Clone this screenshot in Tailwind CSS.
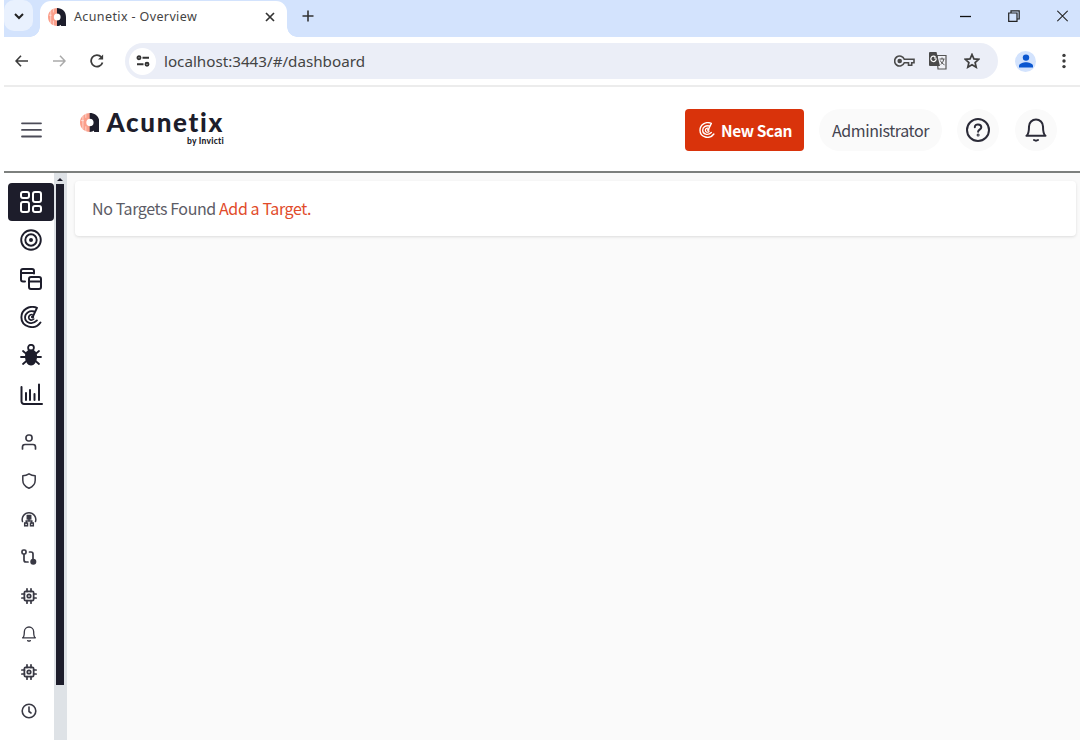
<!DOCTYPE html>
<html lang="en">
<head>
  <meta charset="UTF-8">
  <meta name="viewport" content="width=device-width, initial-scale=1.0">
  <title>Acunetix - Overview</title>
  <script src="https://cdn.jsdelivr.net/npm/@tailwindcss/browser@4"></script>
</head>
<body class="bg-white">
  <!-- Shared symbols -->
  <svg class="hidden">
    <symbol id="mark" viewBox="0 0 20 20">
      <path d="M10.500 0v6a4 4 0 0 0 0 8v6C4 20 0 15.500 0 10S4 0 10.500 0z" fill="#fb9f8b"/>
      <path d="M3 2v15M6 1v4m0 9v6M1 8h3" stroke="#fff" stroke-width=".6" fill="none"/>
      <path d="M10 0c6 0 10 4 10 10v10h-5.500v-1.500C13.500 19.500 12 20 10 20v-6a4 4 0 0 0 0-8z" fill="#1d1d2b"/>
    </symbol>
    <symbol id="radar" viewBox="0 0 24 24" fill="none" stroke="currentColor" stroke-linecap="round" stroke-linejoin="round">
      <path d="M14 11.500L18.500 2C10-1.300 1.500 4 1.500 12.300C1.500 22.800 16 27 22.300 18" stroke-width="2.100"/>
      <path d="M15.500 6C10 4.500 5.500 8 5.500 12.300C5.500 18.500 13.500 21 18.500 15.800" stroke-width="2"/>
      <path d="M13.200 9.300C11 9.200 9.500 10.600 9.500 12.500C9.500 15 12.500 16.500 15 14.200" stroke-width="1.800"/>
      <circle cx="13.600" cy="12" r="1.200" fill="currentColor"/>
    </symbol>
    <symbol id="bell" viewBox="0 0 24 24" fill="none" stroke="currentColor" stroke-width="2" stroke-linecap="round" stroke-linejoin="round">
      <path d="M2.500 17.800h19c-2.200-1.600-2.500-4-2.500-9.300a7 7 0 0 0-14 0c0 5.300-.3 7.700-2.500 9.300zM10 22q2 1.300 4 0"/>
    </symbol>
    <symbol id="chip" viewBox="0 0 24 24" fill="none" stroke="currentColor" stroke-width="2.600" stroke-linecap="round">
      <rect x="5" y="5" width="14" height="14" rx="2"/>
      <circle cx="12" cy="12" r="2.600"/>
      <path d="M9 1.300v4M15 1.300v4M9 19v3.700M15 19v3.700M1.300 9h4M1.300 15h4M19 9h3.700M19 15h3.700"/>
    </symbol>
  </svg>

  <div class="w-[1080px] h-[740px] pl-1 flex flex-col overflow-hidden bg-white text-[#1d1d2b]">
    <!-- Tab strip -->
    <div class="h-[37px] shrink-0 bg-[#d3e3fd] flex">
      <div class="w-9 flex">
        <div class="w-[29px] h-[31px] rounded-[10px] bg-[#e9f1fe] flex items-center justify-center">
          <svg class="w-3 h-3" viewBox="0 0 12 12" fill="none" stroke="#222" stroke-width="2"><path d="M2 4l4 4 4-4"/></svg>
        </div>
      </div>
      <div class="w-[247px] h-9 mt-px rounded-t-[11px] bg-white flex items-center pb-[5px] relative">
        <div class="absolute -left-2.5 bottom-0 w-2.5 h-2.5 bg-[radial-gradient(circle_at_0_0,#d3e3fd_9.5px,#fff_10px)]"></div>
        <div class="absolute -right-2.5 bottom-0 w-2.5 h-2.5 bg-[radial-gradient(circle_at_100%_0,#d3e3fd_9.5px,#fff_10px)]"></div>
        <svg class="w-[18px] h-[18px] ml-2"><use href="#mark"/></svg>
        <span class="ml-2 w-[180px] font-['Noto_Sans',sans-serif] text-[12.500px] leading-4 text-[#444] tracking-[0.380px] whitespace-nowrap">Acunetix - Overview</span>
        <svg class="w-2.5 h-2.5 ml-[11px]" viewBox="0 0 10 10" stroke="#333" stroke-width="1.700"><path d="M1 1l8 8M9 1L1 9"/></svg>
      </div>
      <div class="ml-[15px] flex-1 flex items-center pb-[5px]">
        <svg class="w-3 h-3" viewBox="0 0 12 12" stroke="#333" stroke-width="1.600"><path d="M6 .5v11M.5 6h11"/></svg>
      </div>
      <div class="flex items-center pb-[5px] pr-3 gap-[37px]">
        <svg class="w-[11px] h-3" viewBox="0 0 11 12" stroke="#111" stroke-width="1.300"><path d="M0 6.500h11"/></svg>
        <svg class="w-3 h-3" viewBox="0 0 12 12" fill="none" stroke="#222" stroke-width="1.200"><path d="M.7 3h8.300v8.300H.7zM3 3V.8h8.200V9H9"/></svg>
        <svg class="w-[11px] h-3" viewBox="0 0 11 12" stroke="#222" stroke-width="1.200"><path d="M.3.800l10.400 10.400M10.700.800L.3 11.200"/></svg>
      </div>
    </div>

    <!-- Address bar -->
    <div class="h-[50px] shrink-0 border-b-2 border-[#ececec] flex items-center text-[#444]">
      <svg class="w-[13px] h-3 ml-[11px]" viewBox="0 0 13 12" fill="none" stroke="#3c3c3c" stroke-width="1.600"><path d="M6 .7L1 6l5 5.300M1 6h12"/></svg>
      <svg class="w-[13px] h-3 ml-[25px]" viewBox="0 0 13 12" fill="none" stroke="#aaa" stroke-width="1.500"><path d="M7 .7L12 6l-5 5.300M12 6H0"/></svg>
      <svg class="w-[14px] h-[14px] ml-[24px]" viewBox="0 0 14 14" fill="none" stroke="#3c3c3c" stroke-width="1.800"><path d="M12.500 8.500A5.800 5.800 0 1 1 11.300 3"/><path d="M13.100.5v5H8z" fill="#3c3c3c" stroke="none"/></svg>
      <div class="ml-[21px] w-[873px] h-9 rounded-full bg-[#ebeef7] flex items-center">
        <div class="ml-1 w-[27px] h-[27px] rounded-full bg-white flex items-center justify-center">
          <svg class="w-[14px] h-3" viewBox="0 0 14 12" fill="none" stroke="#333" stroke-width="1.900"><circle cx="3" cy="2.800" r="1.500"/><path d="M6.500 2.800H13M1 9.200h6.500"/><circle cx="11" cy="9.200" r="1.500"/></svg>
        </div>
        <span class="ml-2 flex-1 font-['Noto_Sans',sans-serif] text-[15.200px] leading-5 text-[#444]">localhost:3443/#/dashboard</span>
        <svg class="w-[21px] h-3" viewBox="0 0 21 12" fill="none" stroke="#4a4a4a" stroke-width="1.600"><path d="M10.300 4.200a5 5 0 1 0 0 3.600h4.200v2.400h3.200V7.800H20V4.200z"/><circle cx="5.700" cy="6" r="1.500" fill="#4a4a4a"/></svg>
        <svg class="w-[18px] h-[18px] ml-[14px]" viewBox="0 0 18 18" fill="none">
          <path d="M8 3.500h9v13.500H9z" fill="#f1f2f7" stroke="#555" stroke-width="1.200"/>
          <path d="M1 0h6.500l3.500 14H1a1 1 0 0 1-1-1V1a1 1 0 0 1 1-1z" fill="#4a4a4a"/>
          <path d="M7.300 6H5m2.200.5A2.700 2.700 0 1 1 6.500 5" stroke="#fff" stroke-width="1.200"/>
          <path d="M10.500 7h5M13 5.500V7m1.800 0c-.5 3-2 4.500-3 5.500m-.5-4c.8 2 2.500 3.500 4.200 4.300" stroke="#555"/>
        </svg>
        <svg class="w-4 h-4 mr-[18px] ml-[17px]" viewBox="0 0 16 16" fill="none" stroke="#3f3f3f" stroke-width="1.700"><path d="M8 1.500l1.900 4.400 4.800.4-3.600 3.200 1.100 4.700L8 11.700l-4.200 2.500 1.100-4.700L1.300 6.300l4.800-.4z"/></svg>
      </div>
      <div class="ml-[17px] w-[21px] h-[21px] rounded-full bg-[#d3e3fd] flex items-center justify-center">
        <svg class="w-[14px] h-[14px]" viewBox="0 0 14 14" fill="#0b57d0"><circle cx="7" cy="3.600" r="3.200"/><path d="M0 13.500v-1.700C0 9.500 4.500 8.300 7 8.300s7 1.200 7 3.500v1.700z"/></svg>
      </div>
      <svg class="w-1 h-4 ml-[26px]" viewBox="0 0 4 16" fill="#3c3c3c"><circle cx="2" cy="2.400" r="1.700"/><circle cx="2" cy="8" r="1.700"/><circle cx="2" cy="13.600" r="1.700"/></svg>
    </div>

    <!-- App header -->
    <header class="h-[86px] shrink-0 border-b-2 border-[#7d807e] flex items-center font-['Noto_Sans_CJK_SC',sans-serif]">
      <svg class="w-[21px] h-4 ml-[17px] mt-px" viewBox="0 0 21 16" stroke="#4c4c58" stroke-width="1.800" stroke-linecap="round"><path d="M1 1.300h19M1 7.900h19M1 14.500h19"/></svg>
      <div class="ml-[38px] w-[144px] self-start pt-[22px]">
        <div class="flex items-center h-[26px]">
          <svg class="w-5 h-[19px]" viewBox="0 0 20 20" preserveAspectRatio="none"><use href="#mark"/></svg>
          <span class="ml-[7px] font-['Lato',sans-serif] font-black text-[26px] leading-[26px] tracking-[1.680px]">Acunetix</span>
        </div>
        <div class="mt-px text-right font-['Lato',sans-serif] font-black text-[8.500px] leading-[10px] tracking-[0.250px]">by Invicti</div>
      </div>
      <div class="ml-auto flex items-center">
        <button class="w-[119px] h-[42px] mt-px rounded-[4px] bg-[#d9330b] text-white flex items-center pl-[14px]">
          <svg class="w-4 h-4"><use href="#radar"/></svg>
          <span class="ml-[6px] font-bold text-[15.500px] leading-5 tracking-[-0.400px] whitespace-nowrap">New Scan</span>
        </button>
        <div class="ml-[15px] w-[123px] h-[42px] mt-px rounded-full bg-[#fafafa] flex items-center justify-center text-[16px] leading-5 tracking-[-0.400px] text-[#444450]">Administrator</div>
        <div class="ml-[15px] w-[42px] h-[42px] mt-px rounded-full bg-[#fafafa] flex items-center justify-center">
          <svg class="w-6 h-6" viewBox="0 0 24 24" fill="none" stroke="#2b2b38" stroke-width="2"><circle cx="12" cy="12" r="11"/><path d="M8.800 9.200c0-4 6.500-3.500 6.500 0 0 2.400-3.200 2.500-3.200 4.500" stroke-linecap="round"/><circle cx="12.100" cy="17" r=".5"/></svg>
        </div>
        <div class="ml-4 mr-[23px] w-[42px] h-[42px] mt-px rounded-full bg-[#fafafa] flex items-center justify-center text-[#2b2b38]">
          <svg class="w-6 h-6"><use href="#bell"/></svg>
        </div>
      </div>
    </header>

    <div class="flex flex-1 min-h-0">
      <!-- Sidebar -->
      <nav class="w-[50px] shrink-0 pt-[10px] pl-1 flex flex-col">
        <div class="w-[46px] h-[38px] shrink-0 rounded-[4px] bg-[#1d1d2b] text-white flex items-center justify-center">
          <svg class="w-[22px] h-[22px]" viewBox="0 0 22 22" fill="none" stroke="currentColor" stroke-width="2"><rect x="1" y="1" width="8" height="6" rx="2"/><rect x="1" y="11" width="8" height="10" rx="2"/><rect x="13" y="1" width="8" height="10" rx="2"/><rect x="13" y="15" width="8" height="6" rx="2"/></svg>
        </div>
        <div class="w-[46px] h-[192px] shrink-0 flex flex-col items-center justify-around">
          <svg class="w-[22px] h-[22px]" viewBox="0 0 22 22" fill="none" stroke="currentColor" stroke-width="1.900"><circle cx="11" cy="11" r="9.800"/><circle cx="11" cy="11" r="5.700"/><circle cx="11" cy="11" r="2" fill="currentColor" stroke="none"/></svg>
          <svg class="w-[22px] h-[22px]" viewBox="0 0 22 22" fill="none" stroke="currentColor" stroke-width="2" stroke-linecap="round"><path d="M5 13.500H3a2 2 0 0 1-2-2V3a2 2 0 0 1 2-2h9a2 2 0 0 1 2 2v2.500M1 5h13"/><rect x="9" y="9" width="12" height="12" rx="2"/><path d="M9 13.500h12"/></svg>
          <svg class="w-[22px] h-[22px]"><use href="#radar"/></svg>
          <svg class="w-[22px] h-[22px]" viewBox="0 0 22 22" fill="none" stroke="currentColor" stroke-width="1.800" stroke-linecap="round"><circle cx="11" cy="3.700" r="2.900"/><path d="M11 5.500c4 0 6 3 6 7S15 21.500 11 21.500s-6-5-6-9 2-7 6-7z" fill="currentColor" stroke="none"/><path d="M1 13h20M3 7L6.500 10M19 7L15.500 10M3 20l4-3.500M19 20l-4-3.500"/></svg>
          <svg class="w-[23px] h-[22px]" viewBox="0 0 23 22" fill="none" stroke="currentColor" stroke-width="2" stroke-linecap="round"><path d="M1.500 4v14.500a2.500 2.500 0 0 0 2.500 2.500h18M6 10v7M10 7v10M14.500 11v6M19 1.500V17"/></svg>
        </div>
        <div class="w-[42px] h-[307px] mt-[10px] shrink-0 flex flex-col items-center justify-around text-[#393944]">
          <svg class="w-4 h-4" viewBox="0 0 16 16" fill="none" stroke="currentColor" stroke-width="1.700" stroke-linecap="round"><rect x="5" y="1" width="6" height="6" rx="2.500"/><path d="M1.500 15v-2a2.500 2.500 0 0 1 2.500-2.500h8a2.500 2.500 0 0 1 2.500 2.500v2"/></svg>
          <svg class="w-4 h-4" viewBox="0 0 16 16" fill="none" stroke="currentColor" stroke-width="1.500" stroke-linejoin="round"><path d="M8 .8c1.800 1.200 4 1.900 6.200 1.900v4.500c0 4-2.700 6.600-6.200 8-3.500-1.400-6.200-4-6.200-8V2.700C4 2.700 6.200 2 8 .8z"/></svg>
          <svg class="w-4 h-4" viewBox="0 0 16 16" fill="none" stroke="currentColor" stroke-width="1.500" stroke-linecap="round"><path d="M1.500 10.500A6.800 6.800 0 1 1 14.500 10.500"/><rect x="6.300" y="4.500" width="3.400" height="3.400" fill="currentColor"/><path d="M8 8v2M5.200 12v-2h5.600v2"/><rect x="3.700" y="12" width="2.800" height="2.800"/><rect x="9.500" y="12" width="2.800" height="2.800"/></svg>
          <svg class="w-4 h-4" viewBox="0 0 16 16" fill="none" stroke="currentColor" stroke-width="1.700" stroke-linecap="round"><rect x="1" y="1" width="4" height="4" rx="1.500"/><path d="M3 5.500V11a2 2 0 0 0 2 2h2M8.500 3h1.500a2 2 0 0 1 2 2v6"/><circle cx="12.300" cy="12.800" r="2.200" fill="currentColor"/></svg>
          <svg class="w-4 h-4"><use href="#chip"/></svg>
          <svg class="w-4 h-4"><use href="#bell"/></svg>
          <svg class="w-4 h-4"><use href="#chip"/></svg>
          <svg class="w-4 h-4" viewBox="0 0 16 16" fill="none" stroke="currentColor" stroke-width="1.600" stroke-linecap="round"><circle cx="8" cy="8" r="6.800"/><path d="M8 4v4.500l2 1.500"/></svg>
        </div>
      </nav>

      <!-- Scrollbar -->
      <div class="w-[13px] shrink-0 bg-[#dee2e6] flex flex-col items-center">
        <svg class="w-[6px] h-[3px] mt-[5px] mb-[3px] mr-px shrink-0" viewBox="0 0 6 3"><path d="M0 3l3-3 3 3z" fill="#1d1d2b"/></svg>
        <div class="w-2 h-[501px] mr-px bg-[#1d1d2b]"></div>
      </div>

      <!-- Content -->
      <main class="flex-1 bg-[#fafafa] pt-2 pl-2 pr-1">
        <div class="h-[55px] rounded-[4px] bg-white shadow-[0_1px_3px_rgba(0,0,0,0.12)] flex items-center pl-[17px] pb-px font-['Noto_Sans_CJK_SC',sans-serif] text-[16px] leading-5 tracking-[-0.400px] text-[#5c5c66]">
          <p>No Targets Found <a class="text-[#e14b2a]">Add a Target.</a></p>
        </div>
      </main>
    </div>
  </div>
</body>
</html>
